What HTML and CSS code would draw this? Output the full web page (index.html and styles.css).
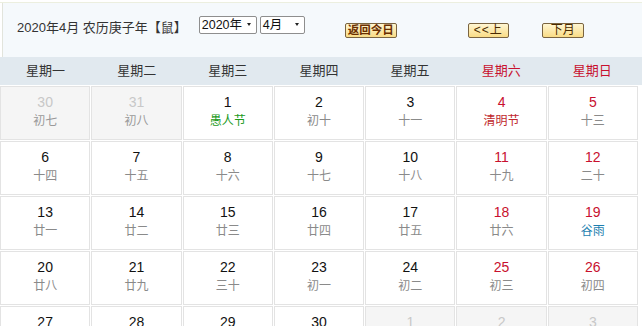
FILE: index.html
```html
<!DOCTYPE html>
<html lang="zh-CN">
<head>
<meta charset="utf-8">
<title>万年历</title>
<link rel="stylesheet" href="styles.css">
</head>
<body>
<div class="cal">
  <div class="head">
    <div class="title">2020年4月 农历庚子年【鼠】</div>
    <div class="sel sel-year">2020年<span class="arr"></span></div>
    <div class="sel sel-month">4月<span class="arr"></span></div>
    <div class="btn btn-today">返回今日</div>
    <div class="btn btn-prev">&lt;&lt;上</div>
    <div class="btn btn-next">下月</div>
  </div>
  <div class="week">
    <div>星期一</div><div>星期二</div><div>星期三</div><div>星期四</div><div>星期五</div><div class="wk">星期六</div><div class="wk">星期日</div>
  </div>
  <div class="grid">
    <div class="cell other"><b>30</b><i>初七</i></div>
    <div class="cell other"><b>31</b><i>初八</i></div>
    <div class="cell"><b>1</b><i class="fest">愚人节</i></div>
    <div class="cell"><b>2</b><i>初十</i></div>
    <div class="cell"><b>3</b><i>十一</i></div>
    <div class="cell we"><b>4</b><i class="red">清明节</i></div>
    <div class="cell we"><b>5</b><i>十三</i></div>

    <div class="cell"><b>6</b><i>十四</i></div>
    <div class="cell"><b>7</b><i>十五</i></div>
    <div class="cell"><b>8</b><i>十六</i></div>
    <div class="cell"><b>9</b><i>十七</i></div>
    <div class="cell"><b>10</b><i>十八</i></div>
    <div class="cell we"><b>11</b><i>十九</i></div>
    <div class="cell we"><b>12</b><i>二十</i></div>

    <div class="cell"><b>13</b><i>廿一</i></div>
    <div class="cell"><b>14</b><i>廿二</i></div>
    <div class="cell"><b>15</b><i>廿三</i></div>
    <div class="cell"><b>16</b><i>廿四</i></div>
    <div class="cell"><b>17</b><i>廿五</i></div>
    <div class="cell we"><b>18</b><i>廿六</i></div>
    <div class="cell we"><b>19</b><i class="term">谷雨</i></div>

    <div class="cell"><b>20</b><i>廿八</i></div>
    <div class="cell"><b>21</b><i>廿九</i></div>
    <div class="cell"><b>22</b><i>三十</i></div>
    <div class="cell"><b>23</b><i>初一</i></div>
    <div class="cell"><b>24</b><i>初二</i></div>
    <div class="cell we"><b>25</b><i>初三</i></div>
    <div class="cell we"><b>26</b><i>初四</i></div>

    <div class="cell"><b>27</b><i>初五</i></div>
    <div class="cell"><b>28</b><i>初六</i></div>
    <div class="cell"><b>29</b><i>初七</i></div>
    <div class="cell"><b>30</b><i>初八</i></div>
    <div class="cell other"><b>1</b><i>初九</i></div>
    <div class="cell other"><b>2</b><i>初十</i></div>
    <div class="cell other"><b>3</b><i>十一</i></div>
  </div>
</div>
</body>
</html>
```

FILE: styles.css
```css
html, body {
  margin: 0;
  padding: 0;
  background: #ffffff;
  overflow: hidden;
}
body {
  font-family: "Liberation Sans", "Noto Sans CJK SC", sans-serif;
  color: #333;
}
.cal {
  width: 642px;
  margin: 2px 0 0 0;
  border-top: 1px solid #ecefdf;
}
.head {
  height: 54px;
  background: #f5f9fc;
  border-left: 1px solid #e2e4dc;
  margin-left: 2px;
  display: flex;
  align-items: flex-start;
  font-size: 13px;
}
.title {
  margin: 16px 0 0 14px;
  line-height: 18px;
  color: #333;
  white-space: nowrap;
}
.sel {
  position: relative;
  margin-top: 13px;
  height: 16px;
  line-height: 16px;
  border: 1px solid #8e8e8e;
  border-radius: 2px;
  background: #fff;
  font-size: 12.5px;
  color: #111;
  padding-left: 2px;
  box-sizing: content-box;
}
.sel-year { margin-left: 12px; width: 54px; }
.sel-month { margin-left: 3px; width: 41px; }
.arr {
  position: absolute;
  right: 5px;
  top: 6px;
  width: 0;
  height: 0;
  border-left: 2px solid transparent;
  border-right: 2px solid transparent;
  border-top: 3px solid #222;
}
.btn {
  margin-top: 20px;
  height: 13px;
  line-height: 13px;
  font-size: 12px;
  border: 1px solid #7a6440;
  border-radius: 2px;
  background: linear-gradient(#fff6d2, #f9dc86);
  color: #4a2a00;
  text-align: center;
  white-space: nowrap;
}
.btn-today {
  margin-left: 40px;
  width: 50px;
  font-weight: bold;
  color: #6a2e00;
  font-size: 11.5px;
}
.btn-prev { margin-left: 71px; width: 39px; letter-spacing: 1px; }
.btn-next { margin-left: 33px; width: 40px; }

.week {
  display: grid;
  grid-template-columns: repeat(7, 91.14px);
  column-gap: 0;
  height: 28px;
  background: #e1e9ef;
  font-size: 13px;
  line-height: 28px;
  text-align: center;
  color: #333;
}
.week .wk { color: #c8102e; }

.grid {
  display: grid;
  grid-template-columns: repeat(7, 1fr);
  grid-auto-rows: 54px;
  width: 638px;
  gap: 1px;
  padding: 1px 0 0 0;
  background: #fff;
}
.cell {
  border: 1px solid #e3e3e3;
  background: #fff;
  display: flex;
  flex-direction: column;
  align-items: center;
  padding-top: 6px;
  box-sizing: border-box;
}
.cell b {
  font-weight: normal;
  font-size: 14px;
  line-height: 18px;
  color: #111;
}
.cell i {
  font-style: normal;
  font-size: 12px;
  line-height: 18px;
  color: #8a8a8a;
  margin-top: 1px;
}
.cell.we b { color: #c8102e; }
.cell.other { background: #f5f5f5; }
.cell.other b { color: #c8c8c8; }
.cell.other i { color: #999; }
.cell i.fest { color: #1c9a1c; }
.cell i.red { color: #c0282d; }
.cell i.term { color: #1d7fb0; }
```
